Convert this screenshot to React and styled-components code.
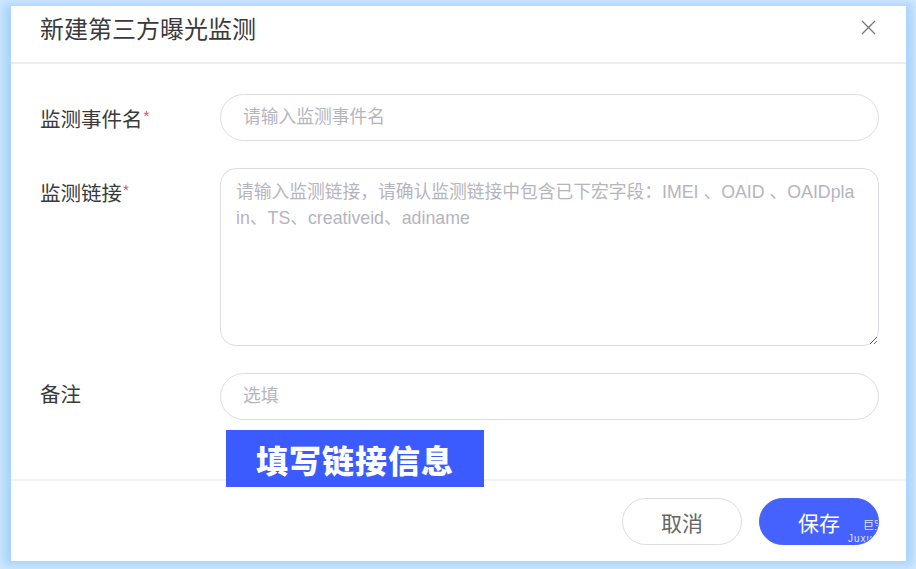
import React from "react"
import styled, { createGlobalStyle } from "styled-components"

const GlobalStyle = createGlobalStyle`
  html, body {
    margin: 0;
    padding: 0;
    background: #a9d4fd;
  }
  * {
    box-sizing: border-box;
  }
`

const fontStack = `"Liberation Sans", "Noto Sans CJK SC", sans-serif`

const Frame = styled.div`
  width: 916px;
  height: 569px;
  padding: 6px 10px 8px 11px;
  background: #a9d4fd;
  box-shadow: inset 0 0 8px 3px #d3e9ff;
  font-family: ${fontStack};
`

const Dialog = styled.div`
  position: relative;
  height: 100%;
  background: #fff;
  display: flex;
  flex-direction: column;
`

const Header = styled.div`
  display: flex;
  align-items: center;
  justify-content: space-between;
  height: 58px;
  padding: 0 30px 14px 29px;
  border-bottom: 2px solid #ebebf1;
`

const Title = styled.h2`
  margin: 0;
  font-size: 24px;
  font-weight: 400;
  color: #3a3a3a;
`

const CloseButton = styled.button`
  width: 16px;
  height: 16px;
  padding: 0;
  border: 0;
  background: none;
  display: flex;
  align-items: center;
  justify-content: center;
  cursor: pointer;
`

const Body = styled.div`
  flex: 1;
  padding: 30px 27px 0 29px;
  display: flex;
  flex-direction: column;
  gap: 27px;
`

const Row = styled.div`
  display: grid;
  grid-template-columns: 180px 1fr;
  align-items: start;
`

const Label = styled.label`
  height: 47px;
  line-height: 43px;
  font-size: 20.5px;
  color: #3a3a3a;
  white-space: nowrap;
`

const Required = styled.span`
  color: #f0463c;
  font-size: 15px;
  vertical-align: 6px;
  margin-left: 1px;
`

const TextInput = styled.input`
  width: 100%;
  height: 47px;
  padding: 0 22px;
  border: 1px solid #dcdde4;
  border-radius: 24px;
  font-family: ${fontStack};
  font-size: 17.75px;
  color: #333;
  outline: none;
  background: #fff;

  &::placeholder {
    color: #b5b5bd;
  }
`

const TextArea = styled.textarea`
  display: block;
  width: 100%;
  height: 178px;
  padding: 10px 22px 8px 15px;
  border: 1px solid #dcdde4;
  border-radius: 16px;
  font-family: ${fontStack};
  font-size: 17.75px;
  line-height: 26px;
  color: #333;
  word-break: break-all;
  outline: none;

  &::placeholder {
    color: #b5b5bd;
  }
`

const Callout = styled.div`
  position: absolute;
  left: 215px;
  top: 424px;
  width: 258px;
  height: 57px;
  background: #3b5bfe;
  color: #fff;
  display: flex;
  align-items: center;
  justify-content: center;
  font-family: "Noto Sans CJK SC", sans-serif;
  font-size: 32px;
  font-weight: 900;
  letter-spacing: 1px;
`

const Footer = styled.div`
  display: flex;
  justify-content: flex-end;
  gap: 17px;
  padding: 17px 27px 16px;
  border-top: 2px solid #f2f2f7;
`

const PillButton = styled.button`
  position: relative;
  overflow: hidden;
  width: 120px;
  height: 47px;
  border-radius: 24px;
  border: 1px solid ${(p) => (p.$primary ? "#4562fe" : "#dcdde4")};
  background: ${(p) => (p.$primary ? "#4562fe" : "#fff")};
  color: ${(p) => (p.$primary ? "#fff" : "#666")};
  font-family: ${fontStack};
  font-size: 21px;
  cursor: pointer;
`

const Watermark = styled.span`
  position: absolute;
  left: 88px;
  top: 20px;
  display: flex;
  flex-direction: column;
  color: rgba(255, 255, 255, 0.85);
  font-size: 10px;
  line-height: 13px;
  white-space: nowrap;
  text-align: left;

  & > span:first-child {
    padding-left: 15px;
    font-size: 11px;
  }
  & > span:last-child {
    letter-spacing: 1px;
  }
`

const CloseIcon = () => (
  <svg width="15" height="15" viewBox="0 0 15 15">
    <path d="M1 1L14 14M14 1L1 14" stroke="#777" strokeWidth="1.3" fill="none" />
  </svg>
)

export default function App() {
  return (
    <>
      <GlobalStyle />
      <Frame>
        <Dialog>
          <Header>
            <Title>新建第三方曝光监测</Title>
            <CloseButton aria-label="关闭">
              <CloseIcon />
            </CloseButton>
          </Header>

          <Body>
            <Row>
              <Label>
                监测事件名<Required>*</Required>
              </Label>
              <TextInput placeholder="请输入监测事件名" />
            </Row>
            <Row>
              <Label>
                监测链接<Required>*</Required>
              </Label>
              <TextArea placeholder="请输入监测链接，请确认监测链接中包含已下宏字段：IMEI 、OAID 、OAIDplain、TS、creativeid、adiname" />
            </Row>
            <Row>
              <Label>备注</Label>
              <TextInput placeholder="选填" />
            </Row>
          </Body>

          <Footer>
            <PillButton>取消</PillButton>
            <PillButton $primary>
              保存
              <Watermark>
                <span>巨宝</span>
                <span>Juxue</span>
              </Watermark>
            </PillButton>
          </Footer>

          <Callout>填写链接信息</Callout>
        </Dialog>
      </Frame>
    </>
  )
}
